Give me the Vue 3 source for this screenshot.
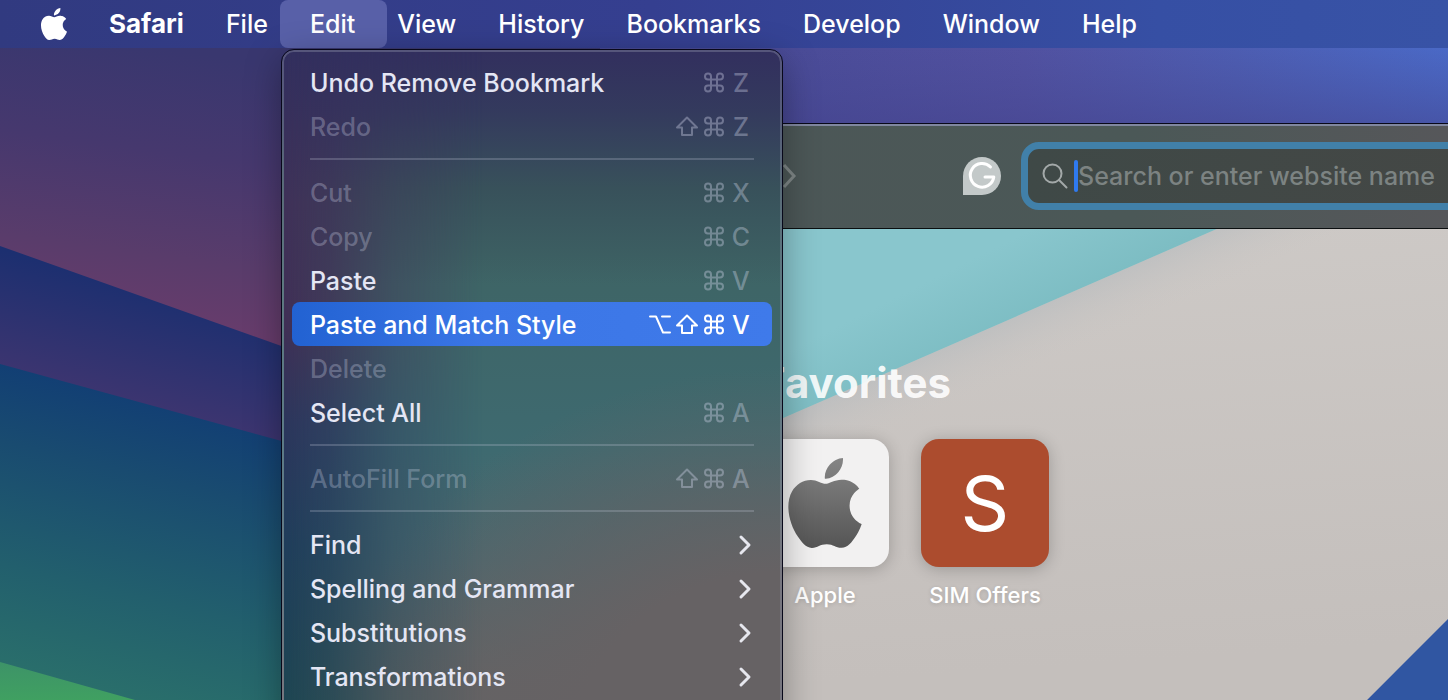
<script setup>
const menus = ['File', 'Edit', 'View', 'History', 'Bookmarks', 'Develop', 'Window', 'Help']

const groups = [
  [
    { label: 'Undo Remove Bookmark', mods: ['cmd'], key: 'Z' },
    { label: 'Redo', mods: ['shift', 'cmd'], key: 'Z', disabled: true },
  ],
  [
    { label: 'Cut', mods: ['cmd'], key: 'X', disabled: true },
    { label: 'Copy', mods: ['cmd'], key: 'C', disabled: true },
    { label: 'Paste', mods: ['cmd'], key: 'V' },
    { label: 'Paste and Match Style', mods: ['option', 'shift', 'cmd'], key: 'V', active: true },
    { label: 'Delete', disabled: true },
    { label: 'Select All', mods: ['cmd'], key: 'A' },
  ],
  [{ label: 'AutoFill Form', mods: ['shift', 'cmd'], key: 'A', disabled: true }],
  [
    { label: 'Find', submenu: true },
    { label: 'Spelling and Grammar', submenu: true },
    { label: 'Substitutions', submenu: true },
    { label: 'Transformations', submenu: true },
  ],
]

const glyphs = {
  option: 'M1 2.500h6l7 16h7M13 2.500h8',
  shift: 'M11 1.500L21 11.500H16v7.500h-10v-7.500H1z',
  cmd: 'M8 7.500h6v6H8zM8 7.500H5a3 3 0 1 1 3-3zM14 7.500v-3a3 3 0 1 1 3 3zM14 13.500h3a3 3 0 1 1-3 3zM8 13.500v3a3 3 0 1 1-3-3z',
}

const apple =
  'M12.152 6.896c-.948 0-2.415-1.078-3.96-1.04-2.04.027-3.91 1.183-4.961 3.014-2.117 3.675-.546 9.103 1.519 12.09 1.013 1.454 2.208 3.09 3.792 3.039 1.52-.065 2.09-.987 3.935-.987 1.831 0 2.35.987 3.96.948 1.637-.026 2.676-1.48 3.676-2.948 1.156-1.688 1.636-3.325 1.662-3.415-.039-.013-3.182-1.221-3.22-4.857-.026-3.04 2.48-4.494 2.597-4.559-1.429-2.09-3.623-2.324-4.39-2.376-2-.156-3.675 1.09-4.61 1.09zM15.53 3.83c.843-1.012 1.4-2.427 1.245-3.83-1.207.052-2.662.805-3.532 1.818-.78.896-1.454 2.338-1.273 3.714 1.338.104 2.715-.688 3.559-1.701'
</script>

<template>
  <div class="desktop">
    <svg class="wallpaper" viewBox="0 0 1448 700" preserveAspectRatio="xMinYMin slice" aria-hidden="true">
      <defs>
        <linearGradient id="dusk" gradientUnits="userSpaceOnUse" x1="100" y1="40" x2="60" y2="330">
          <stop offset="0" stop-color="#39376f" />
          <stop offset=".35" stop-color="#46386e" />
          <stop offset=".7" stop-color="#593c6b" />
          <stop offset="1" stop-color="#6b3c6c" />
        </linearGradient>
        <linearGradient id="sky" x1="0" y1="0" x2="1" y2="0">
          <stop offset="0" stop-color="#454791" />
          <stop offset=".5" stop-color="#5151a0" />
          <stop offset=".75" stop-color="#4d5db1" />
          <stop offset="1" stop-color="#4a69c6" />
        </linearGradient>
        <linearGradient id="skyFade" x1="0" y1="0" x2="0" y2="1">
          <stop offset="0" stop-color="#454791" stop-opacity="0" />
          <stop offset="1" stop-color="#43428c" stop-opacity=".55" />
        </linearGradient>
        <linearGradient id="ridge" gradientUnits="userSpaceOnUse" x1="100" y1="275" x2="70" y2="390">
          <stop offset="0" stop-color="#1c2f70" />
          <stop offset="1" stop-color="#3d3570" />
        </linearGradient>
        <linearGradient id="lake" gradientUnits="userSpaceOnUse" x1="150" y1="400" x2="80" y2="690">
          <stop offset="0" stop-color="#123f74" />
          <stop offset=".25" stop-color="#194b70" />
          <stop offset=".65" stop-color="#225f6d" />
          <stop offset="1" stop-color="#2a6f6b" />
        </linearGradient>
        <linearGradient id="grass" x1="0" y1="0" x2="0" y2="1">
          <stop offset="0" stop-color="#3d9368" />
          <stop offset="1" stop-color="#40a061" />
        </linearGradient>
      </defs>
      <rect width="1448" height="700" fill="url(#dusk)" />
      <rect x="600" width="848" height="240" fill="url(#sky)" />
      <rect x="600" y="48" width="848" height="80" fill="url(#skyFade)" />
      <path d="M0 246L450 406V700H0z" fill="url(#ridge)" />
      <path d="M0 364L450 487V700H0z" fill="url(#lake)" />
      <path d="M0 662L135 700H0z" fill="url(#grass)" />
    </svg>

    <section class="window" aria-label="Safari window">
      <header class="toolbar">
        <button class="forward" aria-label="Forward">
          <svg width="16" height="26" viewBox="0 0 16 26"><path d="M3 2l10 11L3 24" /></svg>
        </button>
        <button class="grammarly" aria-label="Grammarly">
          <svg width="38" height="38" viewBox="0 0 38 38">
            <path class="badge" d="M19 0a19 19 0 0 1 0 38H0V19A19 19 0 0 1 19 0z" />
            <path class="letter" d="M27.500 10a11.800 11.800 0 1 0 3.300 10H22" />
          </svg>
        </button>
        <label class="address">
          <svg width="26" height="26" viewBox="0 0 26 26" aria-hidden="true">
            <circle cx="10.500" cy="10.500" r="9" /><path d="M17 17l7.500 7.500" />
          </svg>
          <span class="caret"></span>
          <input type="text" aria-label="Address" placeholder="Search or enter website name" />
        </label>
      </header>
      <main class="start">
        <svg class="backdrop" viewBox="0 0 1047 470" preserveAspectRatio="xMinYMin slice" aria-hidden="true">
          <defs>
            <linearGradient id="sand" x1="0" y1="0" x2=".15" y2="1">
              <stop offset="0" stop-color="#cecac7" />
              <stop offset="1" stop-color="#c4bfbc" />
            </linearGradient>
            <linearGradient id="shade" gradientUnits="userSpaceOnUse" x1="540" y1="120" x2="562" y2="170">
              <stop offset="0" stop-color="#b3b9bd" stop-opacity=".5" />
              <stop offset="1" stop-color="#c8c5c3" stop-opacity="0" />
            </linearGradient>
            <linearGradient id="water" gradientUnits="userSpaceOnUse" x1="510" y1="60" x2="545" y2="130">
              <stop offset="0" stop-color="#89c6cd" />
              <stop offset="1" stop-color="#7dbdc3" />
            </linearGradient>
          </defs>
          <rect width="1047" height="470" fill="url(#sand)" />
          <path d="M0 355L814 0H960L0 422z" fill="url(#shade)" />
          <path d="M0 355L814 0H0z" fill="url(#water)" />
          <path d="M964 470l83-83v83z" fill="#3056a2" />
        </svg>
        <h1>Favorites</h1>
        <nav class="tiles">
          <a href="#apple">
            <span class="tile light">
              <svg width="90" height="90" viewBox="0 0 24 24" aria-hidden="true">
                <defs>
                  <linearGradient id="steel" x1="0" y1="0" x2="0" y2="1">
                    <stop offset="0" stop-color="#858585" />
                    <stop offset="1" stop-color="#555" />
                  </linearGradient>
                </defs>
                <path :d="apple" fill="url(#steel)" />
              </svg>
            </span>
            <span>Apple</span>
          </a>
          <a href="#sim-offers">
            <span class="tile rust">S</span>
            <span>SIM Offers</span>
          </a>
        </nav>
      </main>
    </section>

    <nav class="menubar" aria-label="Menu bar">
      <button class="logo" aria-label="Apple menu">
        <svg width="32" height="32" viewBox="0 0 24 24"><path :d="apple" /></svg>
      </button>
      <button class="app">Safari</button>
      <div v-for="name in menus" :key="name" class="entry" :class="{ open: name === 'Edit' }">
        <button>{{ name }}</button>
        <div v-if="name === 'Edit'" class="dropdown" role="menu">
          <div v-for="(group, g) in groups" :key="g" class="group">
            <button
              v-for="item in group"
              :key="item.label"
              class="item"
              :class="{ active: item.active }"
              :disabled="item.disabled"
              role="menuitem"
            >
              <span class="label">{{ item.label }}</span>
              <span v-if="item.key" class="keys">
                <svg v-for="m in item.mods" :key="m" width="22" height="22" viewBox="0 0 22 22">
                  <path :d="glyphs[m]" />
                </svg>
                <kbd>{{ item.key }}</kbd>
              </span>
              <svg v-if="item.submenu" class="chevron" width="14" height="22" viewBox="0 0 14 22">
                <path d="M3 3l8 8-8 8" />
              </svg>
            </button>
          </div>
        </div>
      </div>
    </nav>
  </div>
</template>

<style>
body {
  overflow: hidden;
}
</style>

<style scoped>
.desktop {
  position: relative;
  height: 100vh;
  overflow: hidden;
  font-family: Inter, "Liberation Sans", sans-serif;
  font-size: 25px;
  font-weight: 500;
  line-height: 32px;
}
.wallpaper,
.backdrop {
  position: absolute;
  inset: 0;
  width: 100%;
  height: 100%;
}
button {
  padding: 0;
  border: 0;
  background: none;
  color: inherit;
  font: inherit;
}
svg {
  display: block;
  flex: none;
}

.menubar {
  position: relative;
  display: flex;
  align-items: center;
  height: 48px;
  padding-left: 38px;
  gap: 42px;
  background: linear-gradient(90deg, #313a80, #353f90 45%, #364fa4 80%, #3853a6);
  color: #fff;
  white-space: nowrap;
  text-shadow: 0 2px 5px rgba(0, 0, 0, 0.3);
}
.menubar > button,
.entry > button {
  height: 46px;
}
.logo {
  fill: #fff;
  margin-right: -3px;
}
.app {
  font-size: 26px;
  font-weight: 700;
}
.entry {
  position: relative;
}
.entry > button {
  position: relative;
}
.open::before {
  content: "";
  position: absolute;
  inset: -1px -32px -1px -30px;
  border-radius: 8px;
  background: #5860a8;
}

.dropdown {
  position: absolute;
  top: 49px;
  left: -28px;
  width: 500px;
  isolation: isolate;
  box-sizing: border-box;
  padding: 8px 8px 40px;
  border: 2px solid rgba(150, 155, 175, 0.36);
  border-radius: 12px;
  outline: 1px solid #08081a;
  background:
    linear-gradient(180deg, #322f5e 0%, rgba(50, 51, 92, 0.85) 9%, rgba(50, 62, 80, 0.5) 20%, transparent 34%),
    radial-gradient(ellipse 90% 54% at 100% 100%, #666264 45%, transparent 100%),
    linear-gradient(180deg, #3e6465 30%, #3e6a70 58%, #4b686e 74%, #636364 92%);
  background-origin: border-box;
  box-shadow: 0 10px 36px rgba(0, 0, 0, 0.35);
  color: #e4e6f4;
  text-shadow: none;
}
.dropdown::before {
  content: "";
  position: absolute;
  z-index: -1;
  inset: 0;
  border-radius: 10px;
  background: linear-gradient(180deg, #322f5e, #3f3158 22%, #402f55 40%, #2c355c 54%, #1f3d5a 72%, #1c4750);
  mask-image: linear-gradient(90deg, #000 0%, rgba(0, 0, 0, 0.8) 9%, rgba(0, 0, 0, 0.36) 22%, transparent 40%);
}
.group + .group::before {
  content: "";
  display: block;
  height: 2px;
  margin: 10px 18px;
  background: rgba(200, 205, 220, 0.24);
}
.item {
  display: flex;
  align-items: center;
  justify-content: space-between;
  width: 100%;
  height: 44px;
  padding: 2px 20px 0 18px;
  border-radius: 8px;
  text-align: left;
}
.item:disabled {
  color: rgba(215, 220, 240, 0.3);
}
.item.active {
  background: linear-gradient(90deg, #2262d2, #3b76e6 40%, #3f7aea);
  color: #fff;
}
.keys {
  display: flex;
  align-items: center;
  gap: 5px;
  color: rgba(215, 220, 240, 0.36);
}
.active .keys {
  color: #fff;
}
.keys svg {
  fill: none;
  stroke: currentColor;
  stroke-width: 2;
  stroke-linejoin: round;
  stroke-linecap: round;
}
kbd {
  width: 22px;
  font: inherit;
  text-align: center;
}
.chevron {
  fill: none;
  stroke: #e6e7ee;
  stroke-width: 3;
  stroke-linecap: round;
  stroke-linejoin: round;
}

.window {
  position: absolute;
  top: 124px;
  right: 0;
  bottom: 0;
  left: 401px;
  display: flex;
  flex-direction: column;
  border-top: 2px solid #8087a0;
  outline: 1px solid #080818;
}
.toolbar {
  display: flex;
  align-items: center;
  height: 100px;
  padding: 0 0 2px 380px;
  border-bottom: 1px solid #0b0f10;
  background: linear-gradient(90deg, #4d5657, #4b5857 70%, #56575a);
  overflow: hidden;
}
.forward {
  margin-right: 166px;
  fill: none;
  stroke: #7f8787;
  stroke-width: 3;
}
.grammarly {
  margin-right: 20px;
}
.badge {
  fill: #c3c9c9;
}
.letter {
  fill: none;
  stroke: #fff;
  stroke-width: 3;
  stroke-linecap: round;
  stroke-linejoin: round;
}
.address {
  display: flex;
  flex: 1;
  align-items: center;
  box-sizing: border-box;
  height: 68px;
  margin-right: -40px;
  padding-left: 14px;
  border: 7px solid #4180a9;
  border-radius: 18px;
  background: linear-gradient(90deg, #3f4947, #444745);
}
.address svg {
  fill: none;
  stroke: #a3a9a9;
  stroke-width: 2;
  stroke-linecap: round;
}
.caret {
  width: 4px;
  height: 32px;
  margin-left: 6px;
  border-radius: 2px;
  background: #2f7af0;
}
.address input {
  flex: 1;
  min-width: 0;
  padding: 0;
  border: 0;
  outline: 0;
  background: none;
  color: #fff;
  font: inherit;
}
.address input::placeholder {
  color: #7c8382;
  opacity: 1;
}

.start {
  position: relative;
  flex: 1;
  padding: 126px 0 0 360px;
  overflow: hidden;
  color: #fff;
}
h1 {
  position: relative;
  margin: 0 0 28px;
  color: rgba(255, 255, 255, 0.9);
  font-size: 42px;
  line-height: 56px;
}
.tiles {
  position: relative;
  display: flex;
  gap: 32px;
}
.tiles a {
  display: flex;
  flex-direction: column;
  align-items: center;
  gap: 12px;
  color: #fff;
  font-size: 22px;
  text-decoration: none;
  text-shadow: 0 1px 4px rgba(0, 0, 0, 0.15);
}
.tile {
  display: flex;
  align-items: center;
  justify-content: center;
  width: 128px;
  height: 128px;
  border-radius: 18px;
  box-shadow: 0 2px 16px rgba(0, 0, 0, 0.22);
}
.light {
  background: #f2f1f1;
}
.rust {
  background: #ac4c2e;
  font-size: 76px;
  font-weight: 400;
  text-shadow: none;
}
</style>
